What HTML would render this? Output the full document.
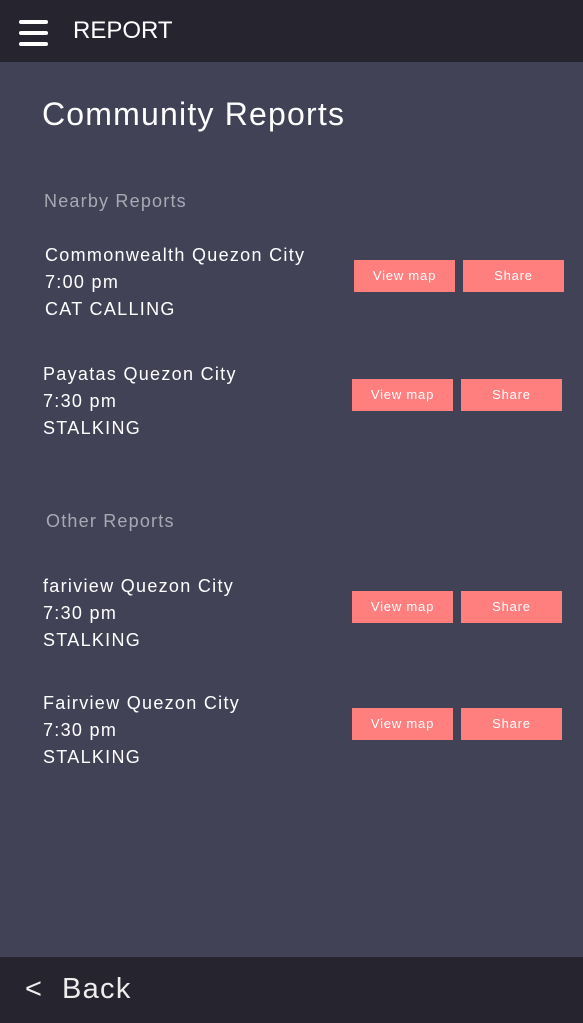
<!DOCTYPE html>
<html><head><meta charset="utf-8"><style>
*{margin:0;padding:0;box-sizing:border-box}
body{width:583px;height:1023px;background:#424257;font-family:"Liberation Sans",sans-serif;color:#fff;position:relative;overflow:hidden}
.hdr{position:absolute;left:0;top:0;width:583px;height:62px;background:#25242f}
.bar{position:absolute;left:19px;width:29px;height:4px;border-radius:2px;background:#fff}
.t{position:absolute;white-space:nowrap}
.it{font-size:18px;letter-spacing:1.3px;line-height:27px}
.btn{position:absolute;width:101px;height:32px;background:#ff7f7f;color:#fff;font-size:13px;letter-spacing:0.8px;text-align:center;line-height:31px}
.sec{font-size:18px;color:#a9a9b4;letter-spacing:1.2px}
.ftr{position:absolute;left:0;top:957px;width:583px;height:66px;background:#25242f}
</style></head><body>
<div class="hdr">
<div class="bar" style="top:20px"></div><div class="bar" style="top:31px"></div><div class="bar" style="top:42px"></div>
<div class="t" style="left:73px;top:17px;font-size:24px;letter-spacing:0">REPORT</div>
</div>
<div class="t" style="left:42px;top:96px;font-size:32px;letter-spacing:1.2px">Community Reports</div>
<div class="t sec" style="left:44px;top:191px">Nearby Reports</div>
<div class="t it" style="left:45px;top:242px">Commonwealth Quezon City<br>7:00 pm<br>CAT CALLING</div>
<div class="btn" style="left:354px;top:260px">View map</div><div class="btn" style="left:463px;top:260px">Share</div>
<div class="t it" style="left:43px;top:361px">Payatas Quezon City<br>7:30 pm<br>STALKING</div>
<div class="btn" style="left:352px;top:379px">View map</div><div class="btn" style="left:461px;top:379px">Share</div>
<div class="t sec" style="left:46px;top:511px">Other Reports</div>
<div class="t it" style="left:43px;top:573px">fariview Quezon City<br>7:30 pm<br>STALKING</div>
<div class="btn" style="left:352px;top:591px">View map</div><div class="btn" style="left:461px;top:591px">Share</div>
<div class="t it" style="left:43px;top:690px">Fairview Quezon City<br>7:30 pm<br>STALKING</div>
<div class="btn" style="left:352px;top:708px">View map</div><div class="btn" style="left:461px;top:708px">Share</div>
<div class="ftr">
<div class="t" style="left:25px;top:16px;font-size:29px;letter-spacing:1.3px;color:#eee">&lt;&nbsp; Back</div>
</div>
</body></html>
